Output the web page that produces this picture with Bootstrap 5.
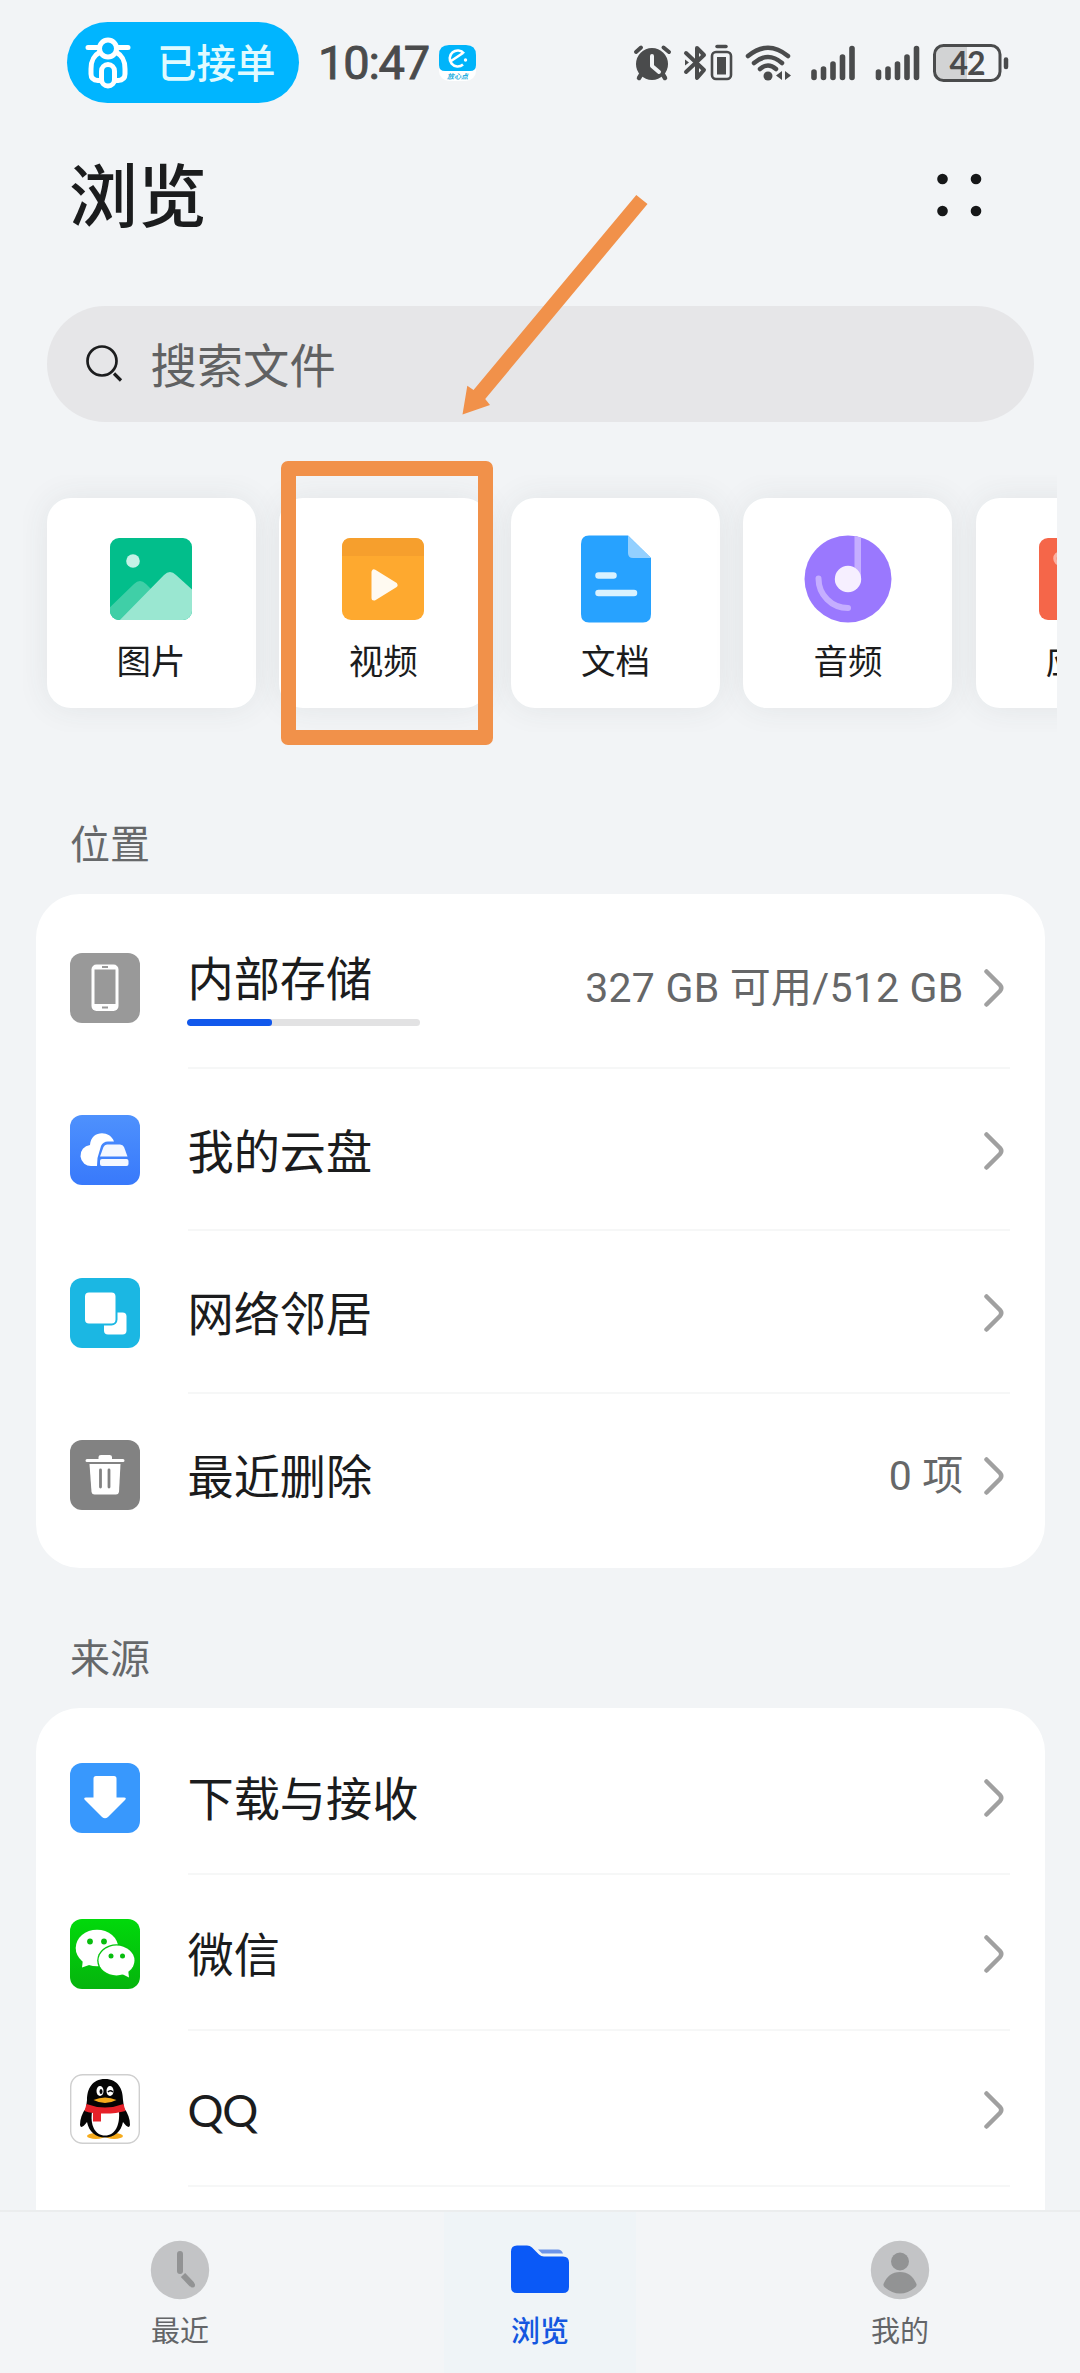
<!DOCTYPE html>
<html lang="zh-CN">
<head>
<meta charset="utf-8">
<meta name="viewport" content="width=device-width, initial-scale=1">
<title>浏览</title>
<link href="https://cdn.jsdelivr.net/npm/bootstrap@5.3.0/dist/css/bootstrap.min.css" rel="stylesheet">
<script src="https://cdn.jsdelivr.net/npm/bootstrap@5.3.0/dist/js/bootstrap.bundle.min.js"></script>
<style>
  body { background: #f2f4f6; color: #1b1c1d; font-family: Lato, "Noto Sans CJK SC", sans-serif; line-height: 1; }
  svg { display: block; flex: none; }
  .screen { width: 1080px; height: 2373px; }
  .latin { font-family: Roboto, "Noto Sans CJK SC", sans-serif; }
  .status { height: 125px; padding: 0 71px 0 67px; }
  .status-inner { height: 125px; }
  .pill { width: 232px; height: 81px; background: #00b5ff; color: #dffaff; padding-left: 18px; font-size: 39.5px; font-weight: 500; }
  .pill span { margin-left: 26px; }
  .clock { font-size: 47px; font-weight: 400; -webkit-text-stroke: .9px #4a4b4c; color: #4a4b4c; letter-spacing: -1.2px; margin-left: 19px; width: 112px; white-space: nowrap; }
  .app-head { height: 181px; padding: 35px 95px 0 69px; align-items: flex-start; }
  .app-head h1 { font-size: 69px; font-weight: 500; line-height: 72px; margin: 0; }
  .searchbox { height: 116px; margin: 0 46.5px; padding-left: 38px; background: #e6e6e8; font-size: 46.3px; color: #606162; }
  .searchbox span { margin-left: 28px; padding-top: 2px; }
  .tiles { height: 257px; margin: 53px 23px 0; padding: 23px 0 0 23.5px; gap: 23.3px; overflow: hidden; }
  .tile { flex: none; width: 209px; height: 210px; background: #fff; border-radius: 24px; box-shadow: 0 0 32px rgba(60,66,70,.085); font-size: 34.500px; padding-top: 36px; gap: 20px; }
  .section-title { font-size: 40px; color: #66686a; padding-left: 70px; height: 40px; line-height: 40px; }
  .panel { margin: 0 35.5px; background: #fff; border-radius: 44px; padding: 12px 35px 12px 34.5px; }
  .panel.cut { border-radius: 44px 44px 0 0; }
  .item { height: 162.5px; gap: 47.5px; padding-top: 1px; }
  .item.short { height: 155.7px; }
  .item-body { font-size: 46.2px; border-bottom: 2px solid #f6f7f7; padding: 3px 6px 0 0; }
  .item:last-child .item-body { border-bottom-color: transparent; }
  .cut .item:last-child .item-body { border-bottom-color: #f6f7f7; }
  .detail { font-size: 41px; color: #666768; margin-right: 20px; letter-spacing: .22px; padding-top: 1px; }
  .usage { width: 233px; height: 7px; border-radius: 4px; margin: 18px 0 0 -1px; background: #e2e2e3; }
  .usage .progress-bar { background: #1158ec; border-radius: 3px; }
  .stored { padding-top: 5px; }
  .qq-name { font-size: 45px; letter-spacing: -1.2px; padding-top: 2px; }
  .tabs { height: 163px; background: #f3f5f7; border-top: 2px solid #ebedee; font-size: 29px; color: #636568; }
  .tabs .tab { padding-top: 28px; gap: 15.500px; }
  .tabs .tab.on { color: #1457e0; font-weight: 500; }
  .tabs .tab-mid { background: #eff4f7; width: 192px; height: 161px; }
  .callout-box { left: 280.5px; top: 461px; width: 212px; height: 284px; border: 15px solid #f1914a; border-radius: 7px; }
  .callout-arrow { left: 460px; top: 190px; }
</style>
</head>
<body>
<div class="screen position-relative overflow-hidden d-flex flex-column">

  <header class="status flex-shrink-0">
    <div class="status-inner d-flex align-items-center">
      <div class="pill rounded-pill d-flex align-items-center">
        <svg width="46" height="52" viewBox="0 0 46 52" fill="none" stroke="#fff" stroke-width="5">
          <path d="M3 10.500H14M32 10.500H43" stroke-linecap="round"/>
          <circle cx="23" cy="11.500" r="8.500"/>
          <path d="M15 15C8 19 6 24 6 32V37Q6 43 13 43.500H15M31 15C38 19 40 24 40 32V37Q40 43 33 43.500H31"/>
          <rect x="16.500" y="27.500" width="13" height="21.500" rx="6.500"/>
        </svg>
        <span>已接单</span>
      </div>
      <div class="clock latin">10:47</div>
      <svg class="ms-2" width="38" height="38" viewBox="0 0 38 38">
        <rect x="1" y="1" width="37" height="36" rx="10" fill="#fff"/>
        <path d="M11 1H28Q38 1 38 11V21Q38 27 32 27H7Q1 27 1 21V11Q1 1 11 1Z" fill="#00b4fa"/>
        <path d="M26 9.500A8 8 0 1 0 25 20.500M13 17L25 9" fill="none" stroke="#fff" stroke-width="2.600"/>
        <circle cx="27.500" cy="16" r="1.700" fill="#fff"/>
        <text x="9" y="34.500" font-size="7" font-weight="700" font-style="italic" fill="#28aee0" font-family="Noto Sans CJK SC">放心点</text>
      </svg>
      <svg class="ms-auto" width="378" height="42" viewBox="631 41 378 42" fill="none" stroke="#4a4b4c" stroke-linecap="round">
        <circle cx="652" cy="63" r="16" fill="#4a4b4c" stroke="none"/>
        <path d="M636 51L641 46.500M663.500 46.500L669 51" stroke-width="4"/>
        <path d="M642 72L639 77M662 72L665 77" stroke-width="4.500"/>
        <path d="M652 55V65L659 71" stroke="#f2f4f6" stroke-width="4" stroke-linejoin="round"/>
        <path d="M686 52L704 69L697 77V47L704 54L686 71" stroke-width="4" stroke-linejoin="round"/>
        <path d="M685 58.500L689 61.500L685 64.500Z" fill="#4a4b4c" stroke="none"/>
        <path d="M717 45.500H726" stroke-width="3.500"/>
        <rect x="712" y="51" width="19" height="27" rx="4" stroke-width="2.600"/>
        <rect x="717" y="56" width="9" height="17.500" fill="#4a4b4c" stroke="none"/>
        <g stroke-width="4.500"><path d="M748 55Q768 38.500 788 55M754 62Q768 50 782 62M760 68Q768 61 776 68"/></g>
        <circle cx="768" cy="75" r="4.500" fill="#4a4b4c" stroke="none"/>
        <path d="M782 70V79L776 74.500ZM785 70V79L791 74.500Z" fill="#4a4b4c" stroke="none"/>
        <g stroke-width="5.600">
          <path d="M814 71V76.500M823.500 68V76.500M833 63V76.500M842.500 56V76.500M852 47.500V76.500"/>
          <path d="M878.500 71V76.500M888 68V76.500M897.500 63V76.500M907 56V76.500M916.500 47.500V76.500"/>
        </g>
        <path d="M967 45H944Q934.500 45 934.500 54V70Q934.500 79 944 79H967Z" fill="#d2d3d4" stroke="none"/>
        <rect x="934.500" y="44.500" width="65.500" height="35" rx="9" stroke-width="3"/>
        <path d="M1006 58.500V66" stroke-width="4.500"/>
        <text x="967" y="73.500" text-anchor="middle" font-family="Lato" font-weight="700" font-size="32" letter-spacing="-1" fill="#4a4b4c" stroke="none">42</text>
      </svg>
    </div>
  </header>

  <div class="app-head d-flex justify-content-between flex-shrink-0">
    <h1>浏览</h1>
    <svg width="52" height="70" viewBox="932 160 52 70" fill="#161718"><circle cx="941.500" cy="179" r="5.300"/><circle cx="975" cy="179" r="5.300"/><circle cx="941.500" cy="211" r="5.300"/><circle cx="975" cy="211" r="5.300"/></svg>
  </div>

  <div class="searchbox rounded-pill d-flex align-items-center flex-shrink-0">
    <svg width="38" height="38" viewBox="0 0 38 38" fill="none" stroke="#1c1d1e"><circle cx="17" cy="16" r="14.500" stroke-width="2.700"/><path d="M29 28.500L36 35.500" stroke-width="3.200"/></svg>
    <span>搜索文件</span>
  </div>

  <div class="tiles d-flex flex-shrink-0">
    <div class="tile d-flex flex-column align-items-center">
      <svg width="90" height="90" viewBox="0 0 90 90">
        <clipPath id="pic"><rect x="4" y="4" width="82" height="82" rx="9"/></clipPath>
        <g clip-path="url(#pic)"><rect width="90" height="90" fill="#02be8b"/><path d="M0 77L28 50Q34 44 40 50L48 58L20 90H0Z" fill="#40cfa7"/><path d="M10 90L58 41Q64 35 70 41L90 59V90Z" fill="#9ae7d1"/><circle cx="27" cy="27" r="6.800" fill="#c4f2e6"/></g>
      </svg>
      <div>图片</div>
    </div>
    <div class="tile d-flex flex-column align-items-center">
      <svg width="90" height="90" viewBox="0 0 90 90"><rect x="4" y="4" width="82" height="82" rx="9" fill="#fea92f"/><path d="M13 4H77Q86 4 86 13V22H4V13Q4 4 13 4Z" fill="#f69f2d"/><path d="M36 38V64L57 51Z" fill="#fffaf1" stroke="#fffaf1" stroke-width="5" stroke-linejoin="round"/></svg>
      <div>视频</div>
    </div>
    <div class="tile d-flex flex-column align-items-center">
      <svg width="90" height="90" viewBox="0 0 90 90"><path d="M18 1.500H57L80 24V80Q80 88.500 72 88.500H18Q10 88.500 10 80V10Q10 1.500 18 1.500Z" fill="#27a2ff"/><path d="M57 1.500L80 24H62Q57 24 57 19Z" fill="#93d0ff"/><path d="M27.500 41.500H42.500M27.500 59H63" stroke="#d9f2ff" stroke-width="6.500" stroke-linecap="round"/></svg>
      <div>文档</div>
    </div>
    <div class="tile d-flex flex-column align-items-center">
      <svg width="90" height="90" viewBox="0 0 90 90"><circle cx="45" cy="45" r="43.500" fill="#9a78fe"/><path d="M51.500 2L58 3.500V45H51.500Z" fill="#c5aeff"/><circle cx="45" cy="45" r="13.200" fill="#f6efff"/><path d="M15.500 44.500A29.500 29.500 0 0 0 45 74" fill="none" stroke="#c5aeff" stroke-width="6" stroke-linecap="round"/></svg>
      <div>音频</div>
    </div>
    <div class="tile d-flex flex-column align-items-center">
      <svg width="90" height="90" viewBox="0 0 90 90"><rect x="4" y="4" width="82" height="82" rx="9" fill="#f56649"/><circle cx="25.500" cy="24.500" r="5.500" fill="none" stroke="#fbb0a2" stroke-width="3.500"/></svg>
      <div>应用</div>
    </div>
  </div>

  <div class="section-title flex-shrink-0" style="margin-top:92px">位置</div>
  <div class="panel flex-shrink-0" style="margin-top:30px">
    <div class="item d-flex align-items-center">
      <svg width="70" height="70" viewBox="0 0 70 70"><rect width="70" height="70" rx="12" fill="#999"/><rect x="21.500" y="11.500" width="27" height="46.500" rx="5" fill="#fff"/><rect x="24.500" y="16.500" width="21" height="34.500" fill="#999"/><path d="M32 14H38M32 54.500H38" stroke="#999" stroke-width="2"/></svg>
      <div class="item-body flex-grow-1 align-self-stretch d-flex align-items-center justify-content-between">
        <div class="stored"><div>内部存储</div><div class="progress usage"><div class="progress-bar" style="width:36.5%"></div></div></div>
        <div class="d-flex align-items-center"><span class="detail latin">327 GB 可用/512 GB</span><svg width="20" height="38" viewBox="0 0 20 38" fill="none" stroke="#a0a0a0" stroke-width="4.500" stroke-linecap="round" stroke-linejoin="round"><path d="M2.500 2.500L16 16Q18.500 19 16 22L2.500 35.500"/></svg></div>
      </div>
    </div>
    <div class="item d-flex align-items-center">
      <svg width="70" height="70" viewBox="0 0 70 70"><defs><linearGradient id="cloud" x2="0" y2="1"><stop stop-color="#4e91fd"/><stop offset="1" stop-color="#3879fb"/></linearGradient></defs><rect width="70" height="70" rx="12" fill="url(#cloud)"/><path d="M27 51H22A10.500 10.500 0 0 1 20 30C21 15 40 15 44 26.500H38Q33 26.500 31 31L27.500 43Z" fill="#fff"/><path d="M37 29.500H50Q53 29.500 54 32L57.500 41.500H30L33.500 32Q34.500 29.500 37 29.500Z" fill="#f4f8ff"/><rect x="30" y="44" width="28.500" height="7" rx="2" fill="#f4f8ff"/></svg>
      <div class="item-body flex-grow-1 align-self-stretch d-flex align-items-center justify-content-between"><div>我的云盘</div><svg width="20" height="38" viewBox="0 0 20 38" fill="none" stroke="#a0a0a0" stroke-width="4.500" stroke-linecap="round" stroke-linejoin="round"><path d="M2.500 2.500L16 16Q18.500 19 16 22L2.500 35.500"/></svg></div>
    </div>
    <div class="item d-flex align-items-center">
      <svg width="70" height="70" viewBox="0 0 70 70"><rect width="70" height="70" rx="12" fill="#1bb7e3"/><rect x="34" y="34.500" width="22.500" height="22" rx="4" fill="#fff"/><rect x="14" y="13.500" width="32.500" height="33" rx="5" fill="#fff" stroke="#1bb7e3" stroke-width="2"/></svg>
      <div class="item-body flex-grow-1 align-self-stretch d-flex align-items-center justify-content-between"><div>网络邻居</div><svg width="20" height="38" viewBox="0 0 20 38" fill="none" stroke="#a0a0a0" stroke-width="4.500" stroke-linecap="round" stroke-linejoin="round"><path d="M2.500 2.500L16 16Q18.500 19 16 22L2.500 35.500"/></svg></div>
    </div>
    <div class="item d-flex align-items-center">
      <svg width="70" height="70" viewBox="0 0 70 70"><rect width="70" height="70" rx="12" fill="#828282"/><path d="M28.500 19V17Q28.500 15 31 15H39.500Q42 15 42 17V19H53Q54.500 19 54.500 20.500T53 22H17Q15.500 22 15.500 20.500T17 19Z" fill="#fff"/><path d="M19.500 24H50.500L49 52Q48.500 54.500 46 54.500H24.500Q22 54.500 21.500 52Z" fill="#fff"/><path d="M30.500 30V47M39 30V47" stroke="#828282" stroke-width="2.800" stroke-linecap="round"/></svg>
      <div class="item-body flex-grow-1 align-self-stretch d-flex align-items-center justify-content-between"><div>最近删除</div><div class="d-flex align-items-center"><span class="detail latin">0 项</span><svg width="20" height="38" viewBox="0 0 20 38" fill="none" stroke="#a0a0a0" stroke-width="4.500" stroke-linecap="round" stroke-linejoin="round"><path d="M2.500 2.500L16 16Q18.500 19 16 22L2.500 35.500"/></svg></div></div>
    </div>
  </div>

  <div class="section-title flex-shrink-0" style="margin-top:70px">来源</div>
  <div class="flex-grow-1 overflow-hidden" style="padding-top:29.5px">
    <div class="panel cut h-100">
      <div class="item short d-flex align-items-center">
        <svg width="70" height="70" viewBox="0 0 70 70"><rect width="70" height="70" rx="12" fill="#3898fd"/><path d="M26 13H44Q46.500 13 46.500 15.500V34.500H54Q57 34.500 55 37L38 54Q35 56.500 32 54L15 37Q13 34.500 16 34.500H23.500V15.500Q23.500 13 26 13Z" fill="#fff"/></svg>
        <div class="item-body flex-grow-1 align-self-stretch d-flex align-items-center justify-content-between"><div>下载与接收</div><svg width="20" height="38" viewBox="0 0 20 38" fill="none" stroke="#a0a0a0" stroke-width="4.500" stroke-linecap="round" stroke-linejoin="round"><path d="M2.500 2.500L16 16Q18.500 19 16 22L2.500 35.500"/></svg></div>
      </div>
      <div class="item short d-flex align-items-center">
        <svg width="70" height="70" viewBox="0 0 70 70"><defs><linearGradient id="wx" x2="0" y2="1"><stop stop-color="#01d90b"/><stop offset="1" stop-color="#05b40d"/></linearGradient></defs><rect width="70" height="70" rx="12" fill="url(#wx)"/><ellipse cx="27" cy="29" rx="21.300" ry="18.300" fill="#fff"/><path d="M13 40L12 48.500L22 45Z" fill="#fff"/><ellipse cx="46.500" cy="41.500" rx="19.300" ry="16.300" fill="#04c40c"/><ellipse cx="46.500" cy="41.500" rx="18" ry="15" fill="#fff"/><path d="M58 50L59 58.500L51 54.500Z" fill="#fff"/><g fill="#07bd0e"><circle cx="20" cy="22.500" r="2.900"/><circle cx="34" cy="22.500" r="2.900"/><circle cx="41" cy="37" r="2.500"/><circle cx="52.500" cy="37" r="2.500"/></g></svg>
        <div class="item-body flex-grow-1 align-self-stretch d-flex align-items-center justify-content-between"><div>微信</div><svg width="20" height="38" viewBox="0 0 20 38" fill="none" stroke="#a0a0a0" stroke-width="4.500" stroke-linecap="round" stroke-linejoin="round"><path d="M2.500 2.500L16 16Q18.500 19 16 22L2.500 35.500"/></svg></div>
      </div>
      <div class="item short d-flex align-items-center">
        <svg width="70" height="70" viewBox="0 0 70 70"><rect x=".7" y=".7" width="68.600" height="68.600" rx="12" fill="#fff" stroke="#cfcfcf" stroke-width="1.400"/><ellipse cx="26" cy="62" rx="9" ry="3" fill="#f6ab1c"/><ellipse cx="44" cy="62" rx="9" ry="3" fill="#f6ab1c"/><path d="M35 5C22 5 17 15 17 26L16 34C12 39 10 45 10 51Q11 56 17 48C19 58 26 63.500 35 63.500S51 58 53 48Q59 56 60 51C60 45 58 39 54 34L53 26C53 15 48 5 35 5Z" fill="#050505"/><path d="M22 38H49C50 51 45 61.500 35 61.500S20 51 22 38Z" fill="#fff"/><path d="M16.500 30Q35 37 53.500 30L55.500 37Q45 40 31 39.500V47.500H23V39Q18 38.500 14.500 37Z" fill="#e62129"/><ellipse cx="30" cy="17" rx="3.500" ry="5" fill="#fff"/><ellipse cx="40" cy="17" rx="3.500" ry="5" fill="#fff"/><ellipse cx="31" cy="17.500" rx="1.500" ry="2.500" fill="#050505"/><path d="M38 18Q40 15.500 43 18" fill="none" stroke="#050505" stroke-width="1.500"/><path d="M23.500 26Q35 21 46.500 26Q35 32 23.500 26Z" fill="#f6ab1c"/></svg>
        <div class="item-body flex-grow-1 align-self-stretch d-flex align-items-center justify-content-between"><div class="qq-name">QQ</div><svg width="20" height="38" viewBox="0 0 20 38" fill="none" stroke="#a0a0a0" stroke-width="4.500" stroke-linecap="round" stroke-linejoin="round"><path d="M2.500 2.500L16 16Q18.500 19 16 22L2.500 35.500"/></svg></div>
      </div>
    </div>
  </div>

  <nav class="tabs d-flex flex-shrink-0">
    <div class="tab flex-fill w-100 d-flex flex-column align-items-center">
      <svg width="60" height="60" viewBox="0 0 60 60"><circle cx="30" cy="30" r="29.200" fill="#c3c4c6"/><path d="M30 14V31" stroke="#929394" stroke-width="6" stroke-linecap="round"/><path d="M33 35L42 44.500" stroke="#929394" stroke-width="6"/><circle cx="42.500" cy="45" r="2.500" fill="#929394"/></svg>
      <div>最近</div>
    </div>
    <div class="flex-fill w-100 d-flex justify-content-center">
      <div class="tab tab-mid on d-flex flex-column align-items-center">
        <svg width="60" height="60" viewBox="0 0 60 60"><path d="M7 5.500H17Q20 5.500 22 7.500L29 14.500Q31 16.500 34 16.500H53Q59 16.500 59 22.500V47Q59 53 53 53H7Q1 53 1 47V11.500Q1 5.500 7 5.500Z" fill="#0a59f7"/><path d="M28 9.500H48Q51.500 9.500 53 13.500H32Z" fill="#6f95e8"/></svg>
        <div>浏览</div>
      </div>
    </div>
    <div class="tab flex-fill w-100 d-flex flex-column align-items-center">
      <svg width="60" height="60" viewBox="0 0 60 60"><circle cx="30" cy="30" r="29.200" fill="#c3c4c6"/><circle cx="30" cy="21.500" r="9" fill="#929394"/><path d="M13.500 44C17 36 22 32 30 32S43 36 46.500 44Q47 46 45 47.500Q38 53.500 30 53.500T15 47.500Q13 46 13.500 44Z" fill="#929394"/></svg>
      <div>我的</div>
    </div>
  </nav>

  <div class="callout-box position-absolute"></div>
  <svg class="callout-arrow position-absolute" width="192" height="228" viewBox="460 190 192 228"><path d="M636.300 195L647.500 204L485.200 399L490 405L462.500 414.500L467.300 385.700L473.500 390Z" fill="#f1914a"/></svg>
</div>
</body>
</html>
